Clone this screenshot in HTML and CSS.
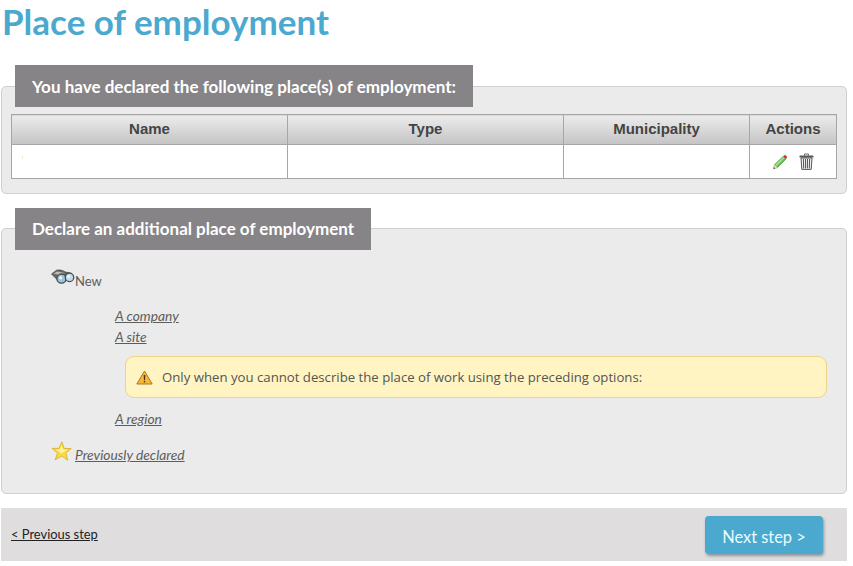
FILE: index.html
```html
<!DOCTYPE html>
<html lang="en">
<head>
<meta charset="utf-8">
<title>Place of employment</title>
<link rel="stylesheet" href="styles.css">
</head>
<body>
<h1 class="page-title">Place of employment</h1>
<section class="panel panel-declared">
  <h2 class="legend">You have declared the following place(s) of employment:</h2>
  <table class="grid">
    <thead>
      <tr>
        <th class="col-name">Name</th>
        <th class="col-type">Type</th>
        <th class="col-muni">Municipality</th>
        <th class="col-actions">Actions</th>
      </tr>
    </thead>
    <tbody>
      <tr>
        <td class="name-cell"><span class="speck"></span></td>
        <td></td>
        <td></td>
        <td class="actions">
          <svg class="icon-pencil" width="16" height="16" viewBox="0 0 16 16">
            <path d="M1.5 14.8 L2.6 10.6 L11.2 2.4 L14 5 L5.4 13.6 Z" fill="#58b947" stroke="#3f8f35" stroke-width=".6"/>
            <path d="M3.4 10.6 L11.4 3 L12.6 4.2 L4.8 12 Z" fill="#a5e38c"/>
            <path d="M11.2 2.4 L12.6 1.1 C13.4.6 15.4 2.4 15 3.6 L14 5 Z" fill="#d8343f"/>
            <path d="M1.5 14.8 L2.6 10.6 L5.4 13.6 Z" fill="#f0d9a8"/>
            <path d="M1.5 14.8 L1.9 13.2 L3.1 14.3 Z" fill="#333"/>
          </svg>
          <svg class="icon-trash" width="15" height="17" viewBox="0 0 15 17">
            <path d="M5.5 2.5 V1 H9.5 V2.5" fill="none" stroke="#666" stroke-width="1"/>
            <rect x=".5" y="2.5" width="14" height="2" rx=".6" fill="#555"/>
            <path d="M2 5 H13 L12.2 16.4 H2.8 Z" fill="#f1f1f1" stroke="#444" stroke-width=".9"/>
            <path d="M4.4 6 L4.7 15.4 M6.5 6 L6.6 15.4 M8.5 6 L8.4 15.4 M10.6 6 L10.3 15.4" stroke="#555" stroke-width="1"/>
          </svg>
        </td>
      </tr>
    </tbody>
  </table>
</section>
<section class="panel panel-add">
  <h2 class="legend">Declare an additional place of employment</h2>
  <div class="option option-new">
    <svg class="icon-binoculars" width="24" height="16" viewBox="0.5 0 24 16">
      <path d="M1 5 L6 1.2 C9 .6 12 1 15 3 L20 4 L17 9 L7 11 Z" fill="#6a6a6a" stroke="#333" stroke-width=".6"/>
      <path d="M3 4.6 L7 2.6 L14 4 L9 6 Z" fill="#bdbdbd"/>
      <circle cx="11" cy="9.6" r="4.6" fill="#9fc3dc" stroke="#4a4a4a" stroke-width="1.3"/>
      <circle cx="19" cy="8.4" r="4.2" fill="#c2dcec" stroke="#4a4a4a" stroke-width="1.3"/>
      <circle cx="10.2" cy="8.8" r="1.6" fill="#eef6fb"/>
      <circle cx="18.2" cy="7.6" r="1.5" fill="#f2f8fc"/>
    </svg>
    <span class="option-label">New</span>
  </div>
  <ul class="sublinks">
    <li><a href="#">A company</a></li>
    <li><a href="#">A site</a></li>
  </ul>
  <div class="notice">
    <svg class="icon-warning" width="17" height="15" viewBox="0 0 17 15">
      <path d="M8.5 1 L16.2 14 H.8 Z" fill="#f3b73c" stroke="#a9772a" stroke-width="1" stroke-linejoin="round"/>
      <path d="M7.7 5 H9.3 L9 10 H8 Z" fill="#4a3510"/>
      <rect x="7.8" y="10.8" width="1.4" height="1.6" fill="#4a3510"/>
    </svg>
    <span>Only when you cannot describe the place of work using the preceding options:</span>
  </div>
  <ul class="sublinks sublinks-last">
    <li><a href="#">A region</a></li>
  </ul>
  <div class="option option-prev">
    <svg class="icon-star" width="21" height="21" viewBox="0 0 21 21">
      <path d="M10.8 .8 L13.2 7.4 L20.2 7.6 L14.8 11.9 L16.7 19.2 L10.6 15 L4.2 18.8 L6.6 12 L1 7.4 L8 7.4 Z" fill="#fbdc3c" stroke="#d6ab26" stroke-width=".8" stroke-linejoin="round"/>
      <path d="M10.7 4 L12 8.6 L16.8 8.8 L12.6 11 L10.5 12.6 L7.6 10.4 L4.4 8.6 L8.8 8.6 Z" fill="#fff2a0"/>
    </svg>
    <a href="#">Previously declared</a>
  </div>
</section>
<footer class="wizard-nav">
  <a class="prev" href="#">&lt; Previous step</a>
  <a class="next" href="#">Next step &gt;</a>
</footer>
</body>
</html>
```
FILE: styles.css
```css
* { box-sizing: border-box; }
html, body { margin: 0; padding: 0; }
body {
  width: 853px;
  height: 566px;
  overflow: hidden;
  background: #fff;
  font-family: "Lato", "Liberation Sans", sans-serif;
  color: #555;
}
.page-title {
  margin: 0 0 0 2px;
  height: 65px;
  font-size: 35px;
  line-height: 42px;
  font-weight: 700;
  color: #4ba9cf;
}
.panel {
  width: 846px;
  margin-left: 1px;
  background: #ebebeb;
  border: 1px solid #cfcfcf;
  border-radius: 5px;
}
.panel-declared { margin-top: 21px; height: 108px; padding: 0 9px; }
.panel-add { margin-top: 34px; height: 266px; }
.legend {
  display: inline-block;
  height: 42px;
  margin: -21px 0 0 13px;
  padding: 0 17px;
  vertical-align: top;
  background: #868487;
  color: #fff;
  font-size: 17px;
  line-height: 42px;
  font-weight: 700;
  white-space: nowrap;
}
.panel-declared .legend {
  margin: -22px 0 0 4px;
  font-size: 17.05px;
  line-height: 44px;
}
.grid {
  display: table;
  width: 826px;
  margin-top: 7px;
  border-collapse: collapse;
  table-layout: fixed;
  background: #fff;
}
.grid th, .grid td { border: 1px solid #a6a6a6; padding: 0; }
.grid th {
  height: 30px;
  padding-bottom: 2px;
  background: linear-gradient(#ececec, #c4c4c4);
  font-family: "Liberation Sans", sans-serif;
  font-size: 15px;
  font-weight: 700;
  color: #444;
}
.grid td { height: 34px; }
.col-name, .col-type { width: 276px; }
.col-muni { width: 186px; }
.col-actions { width: 87px; }
.name-cell { vertical-align: top; line-height: 0; }
.speck {
  display: inline-block;
  width: 1px;
  height: 3px;
  margin: 11px 0 0 10px;
  background: #efe8cc;
}
.actions { text-align: center; line-height: 0; }
.icon-pencil { margin: 0 7px 0 0; vertical-align: middle; }
.icon-trash { vertical-align: middle; }
.option {
  display: flex;
  align-items: center;
  margin-left: 49px;
  font-size: 13.8px;
  color: #5d5d5d;
}
.option-new { margin-top: 18px; height: 22px; align-items: flex-start; }
.option-label { padding-top: 4px; line-height: 18px; font-size: 13px; }
.icon-binoculars { margin-top: 1px; }
.sublinks {
  list-style: none;
  margin: 15px 0 0 113px;
  padding: 0;
  font-size: 13.8px;
  font-style: italic;
  line-height: 21px;
}
.sublinks-last { margin-top: 10px; }
a { color: #5d5d5d; }
.notice {
  display: flex;
  align-items: center;
  width: 702px;
  height: 42px;
  margin: 9px 0 0 123px;
  padding-left: 10px;
  background: #fff4c2;
  border: 1px solid #eed38a;
  border-radius: 9px;
  font-family: "Open Sans", sans-serif;
  font-size: 13.2px;
  color: #555;
  white-space: nowrap;
}
.notice span { margin-left: 9px; }
.option-prev {
  margin-top: 12px;
  height: 24px;
  font-style: italic;
}
.option-prev a { margin-left: 3px; padding-top: 3px; }
.icon-star { margin-top: -4px; }
.wizard-nav {
  display: flex;
  align-items: center;
  justify-content: space-between;
  width: 846px;
  height: 53px;
  margin: 14px 0 0 1px;
  padding: 0 24px 0 10px;
  background: #dfdddd;
  font-size: 12.9px;
}
.prev { color: #222; margin-top: -1px; }
.next {
  display: block;
  width: 118px;
  height: 38px;
  margin-top: 1px;
  background: #4ba9cf;
  border-radius: 4px;
  box-shadow: 1px 2px 3px rgba(70, 90, 110, .55);
  color: #e8fbff;
  font-size: 16.4px;
  line-height: 41px;
  text-align: center;
  text-decoration: none;
}
```
